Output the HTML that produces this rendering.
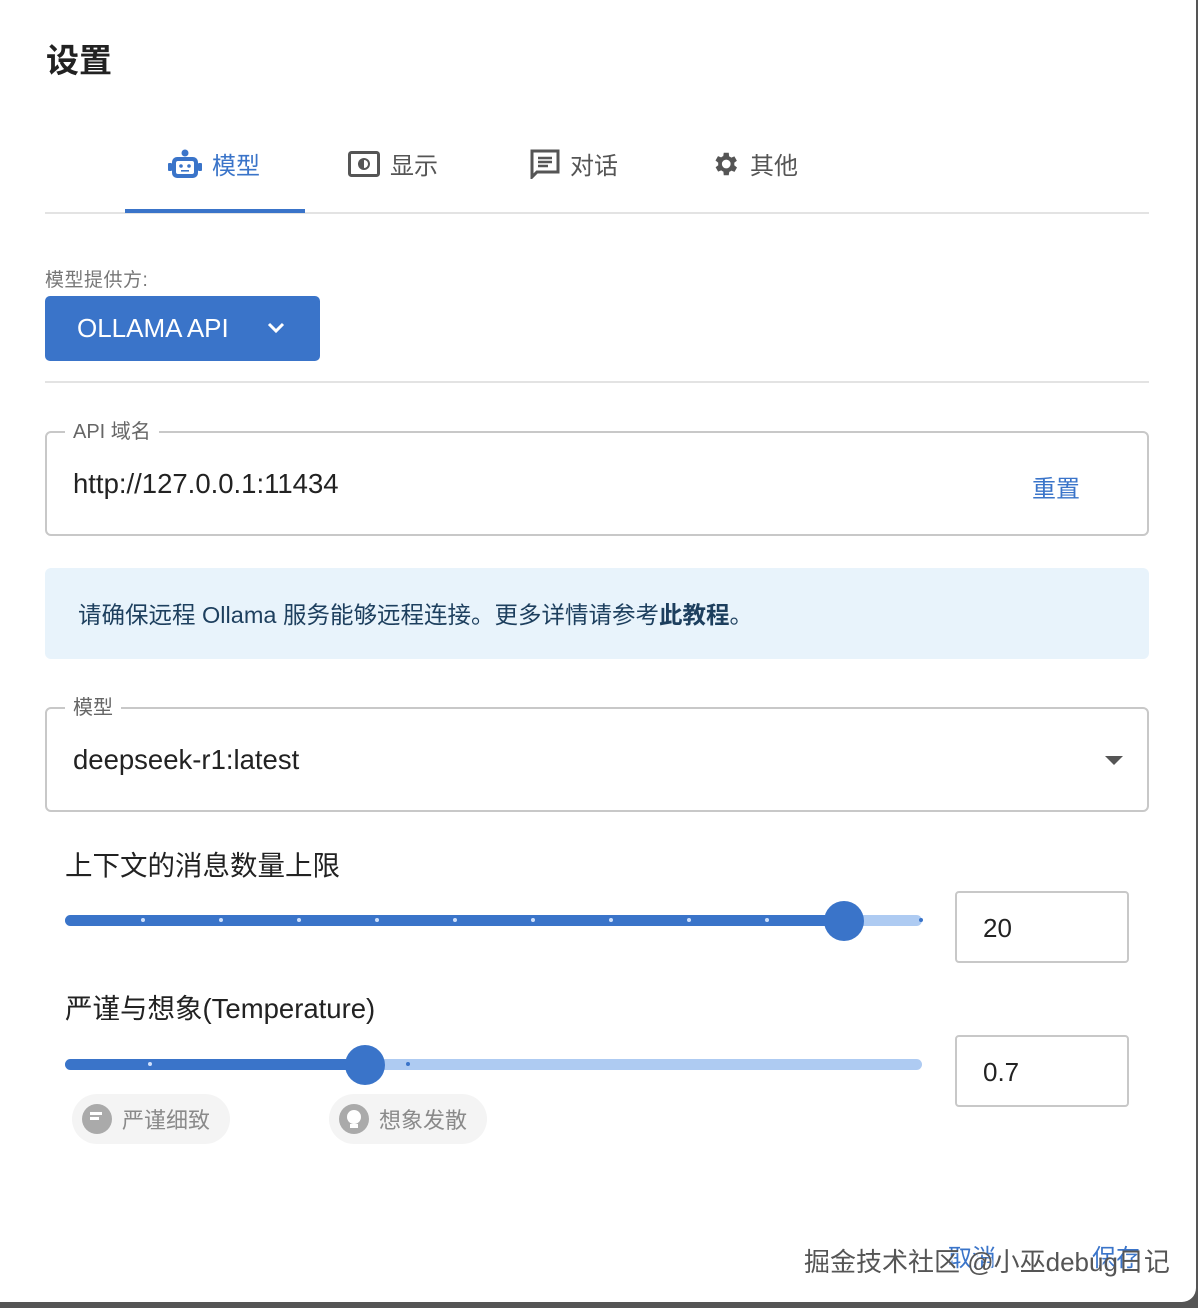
<!DOCTYPE html><html><head><meta charset="utf-8"><style>
*{margin:0;padding:0;box-sizing:border-box}
body{width:1198px;height:1308px;background:#555;font-family:"Liberation Sans","Noto Sans CJK SC",sans-serif;position:relative;overflow:hidden}
.dlg{position:absolute;left:0;top:0;width:1196px;height:1302px;background:#fff;border-radius:0 0 14px 0}
.a{position:absolute}
.tab{position:absolute;top:146px;font-size:24px;color:#555;display:flex;align-items:center;gap:10px}
.box{position:absolute;border:2px solid #c8c8c8;border-radius:6px}
.lbl{position:absolute;background:#fff;padding:0 8px;font-size:19px;color:#666}
.dot{position:absolute;width:4px;height:4px;border-radius:2px;background:#cfe0fb;top:3px}
.chip{position:absolute;height:50px;border-radius:25px;background:#f4f4f4;font-size:22px;color:#8a8a8a;display:flex;align-items:center;padding-left:10px;gap:10px}
.ci{width:30px;height:30px;border-radius:15px;background:#aaa;position:relative}
</style></head><body><div class="dlg">
<div class="a" style="left:46px;top:34px;font-size:33px;font-weight:bold;color:#222">设置</div>
<div class="tab" style="left:168px;color:#3a74c9">
<svg width="34" height="30" viewBox="0 0 34 30"><circle cx="17" cy="4" r="3.5" fill="#3a74c9"/><rect x="4" y="8" width="26" height="21" rx="5" fill="#3a74c9"/><rect x="0" y="14" width="4" height="8" rx="1" fill="#3a74c9"/><rect x="30" y="14" width="4" height="8" rx="1" fill="#3a74c9"/><rect x="8" y="12" width="18" height="13" rx="2" fill="#fff"/><circle cx="13" cy="17" r="1.8" fill="#3a74c9"/><circle cx="21" cy="17" r="1.8" fill="#3a74c9"/><rect x="13" y="21" width="8" height="1.6" fill="#3a74c9"/></svg>模型</div>
<div class="tab" style="left:348px"><svg width="32" height="26" viewBox="0 0 32 26"><rect x="1.5" y="1.5" width="29" height="23" rx="2" fill="none" stroke="#555" stroke-width="3"/><circle cx="16" cy="13" r="6" fill="#555"/><path d="M16 9a4 4 0 0 1 0 8z" fill="#fff"/></svg>显示</div>
<div class="tab" style="left:530px"><svg width="30" height="30" viewBox="0 0 30 30"><path d="M2 2h26v21H7l-5 5z" fill="none" stroke="#555" stroke-width="3"/><path d="M8 9h14M8 13h14M8 17h10" stroke="#555" stroke-width="2.5"/></svg>对话</div>
<div class="tab" style="left:710px"><svg width="30" height="30" viewBox="0 0 24 24"><path fill="#555" d="M19.4 13a7.5 7.5 0 0 0 0-2l2.1-1.6-2-3.5-2.5 1a7 7 0 0 0-1.7-1L15 3h-4l-.4 2.7a7 7 0 0 0-1.7 1l-2.5-1-2 3.5L6.6 11a7.5 7.5 0 0 0 0 2l-2.1 1.6 2 3.5 2.5-1a7 7 0 0 0 1.7 1L11 21h4l.4-2.7a7 7 0 0 0 1.7-1l2.5 1 2-3.5zM13 15.5a3.5 3.5 0 1 1 0-7 3.5 3.5 0 0 1 0 7z"/></svg>其他</div>
<div class="a" style="left:45px;top:212px;width:1104px;height:2px;background:#e3e3e3"></div>
<div class="a" style="left:125px;top:209px;width:180px;height:4px;background:#3a74c9"></div>
<div class="a" style="left:45px;top:265px;font-size:19px;color:#777;letter-spacing:0.5px">模型提供方:</div>
<div class="a" style="left:45px;top:296px;width:275px;height:65px;background:#3a74c9;border-radius:5px;color:#fff;font-size:26px;padding:17px 0 0 32px">OLLAMA API<svg class="a" style="left:222px;top:26px" width="18" height="12" viewBox="0 0 18 12"><path d="M2 2l7 7 7-7" fill="none" stroke="#fff" stroke-width="3"/></svg></div>
<div class="a" style="left:45px;top:381px;width:1104px;height:2px;background:#e3e3e3"></div>
<div class="box" style="left:45px;top:431px;width:1104px;height:105px"></div>
<div class="lbl" style="left:65px;top:415px;font-size:20px">API 域名</div>
<div class="a" style="left:73px;top:468px;font-size:27.5px;color:#222">http://127.0.0.1:11434</div>
<div class="a" style="left:1032px;top:469px;font-size:24px;color:#3a74c9">重置</div>
<div class="a" style="left:45px;top:568px;width:1104px;height:91px;background:#e8f3fb;border-radius:6px;font-size:23.5px;color:#1d3f5e;padding:28px 0 0 33px">请确保远程 Ollama 服务能够远程连接。更多详情请参考<b>此教程</b>。</div>
<div class="box" style="left:45px;top:707px;width:1104px;height:105px"></div>
<div class="lbl" style="left:65px;top:691px;font-size:20px">模型</div>
<div class="a" style="left:73px;top:744px;font-size:27.5px;color:#222">deepseek-r1:latest</div>
<svg class="a" style="left:1105px;top:756px" width="18" height="10"><path d="M0 0h18L9 9z" fill="#555"/></svg>
<div class="a" style="left:65px;top:843px;font-size:27.5px;color:#222">上下文的消息数量上限</div>
<div class="a" style="left:65px;top:915px;width:857px;height:11px;background:#aecbf2;border-radius:6px"><div class="a" style="left:0;top:0;width:780px;height:11px;background:#3a74c9;border-radius:6px"></div>
<div class="dot" style="left:76px"></div><div class="dot" style="left:154px"></div><div class="dot" style="left:232px"></div><div class="dot" style="left:310px"></div><div class="dot" style="left:388px"></div><div class="dot" style="left:466px"></div><div class="dot" style="left:544px"></div><div class="dot" style="left:622px"></div><div class="dot" style="left:700px"></div><div class="dot" style="left:854px;background:#3a74c9"></div></div>
<div class="a" style="left:824px;top:901px;width:40px;height:40px;border-radius:20px;background:#3a74c9"></div>
<div class="box" style="left:955px;top:891px;width:174px;height:72px;border-radius:4px;font-size:26px;color:#222;padding:20px 0 0 26px">20</div>
<div class="a" style="left:65px;top:986px;font-size:27.5px;color:#222">严谨与想象(Temperature)</div>
<div class="a" style="left:65px;top:1059px;width:857px;height:11px;background:#aecbf2;border-radius:6px"><div class="a" style="left:0;top:0;width:300px;height:11px;background:#3a74c9;border-radius:6px"></div><div class="dot" style="left:83px"></div><div class="dot" style="left:341px;background:#3a74c9"></div></div>
<div class="a" style="left:345px;top:1045px;width:40px;height:40px;border-radius:20px;background:#3a74c9"></div>
<div class="box" style="left:955px;top:1035px;width:174px;height:72px;border-radius:4px;font-size:26px;color:#222;padding:20px 0 0 26px">0.7</div>
<div class="chip" style="left:72px;top:1094px;width:158px"><div class="ci"><div class="a" style="left:8px;top:8px;width:12px;height:3px;background:#fff"></div><div class="a" style="left:8px;top:13px;width:9px;height:3px;background:#fff"></div></div>严谨细致</div>
<div class="chip" style="left:329px;top:1094px;width:158px"><div class="ci"><div class="a" style="left:8px;top:6px;width:14px;height:14px;border-radius:7px;background:#fff"></div><div class="a" style="left:11px;top:20px;width:8px;height:4px;background:#fff"></div></div>想象发散</div>
<div class="a" style="left:948px;top:1238px;font-size:24px;color:#3a74c9">取消</div>
<div class="a" style="left:1092px;top:1238px;font-size:24px;color:#3a74c9">保存</div>
<div class="a" style="left:804px;top:1242px;font-size:26px;color:#555;text-shadow:1px 1px 1px #fff">掘金技术社区 @小巫debug日记</div>
</div></body></html>
